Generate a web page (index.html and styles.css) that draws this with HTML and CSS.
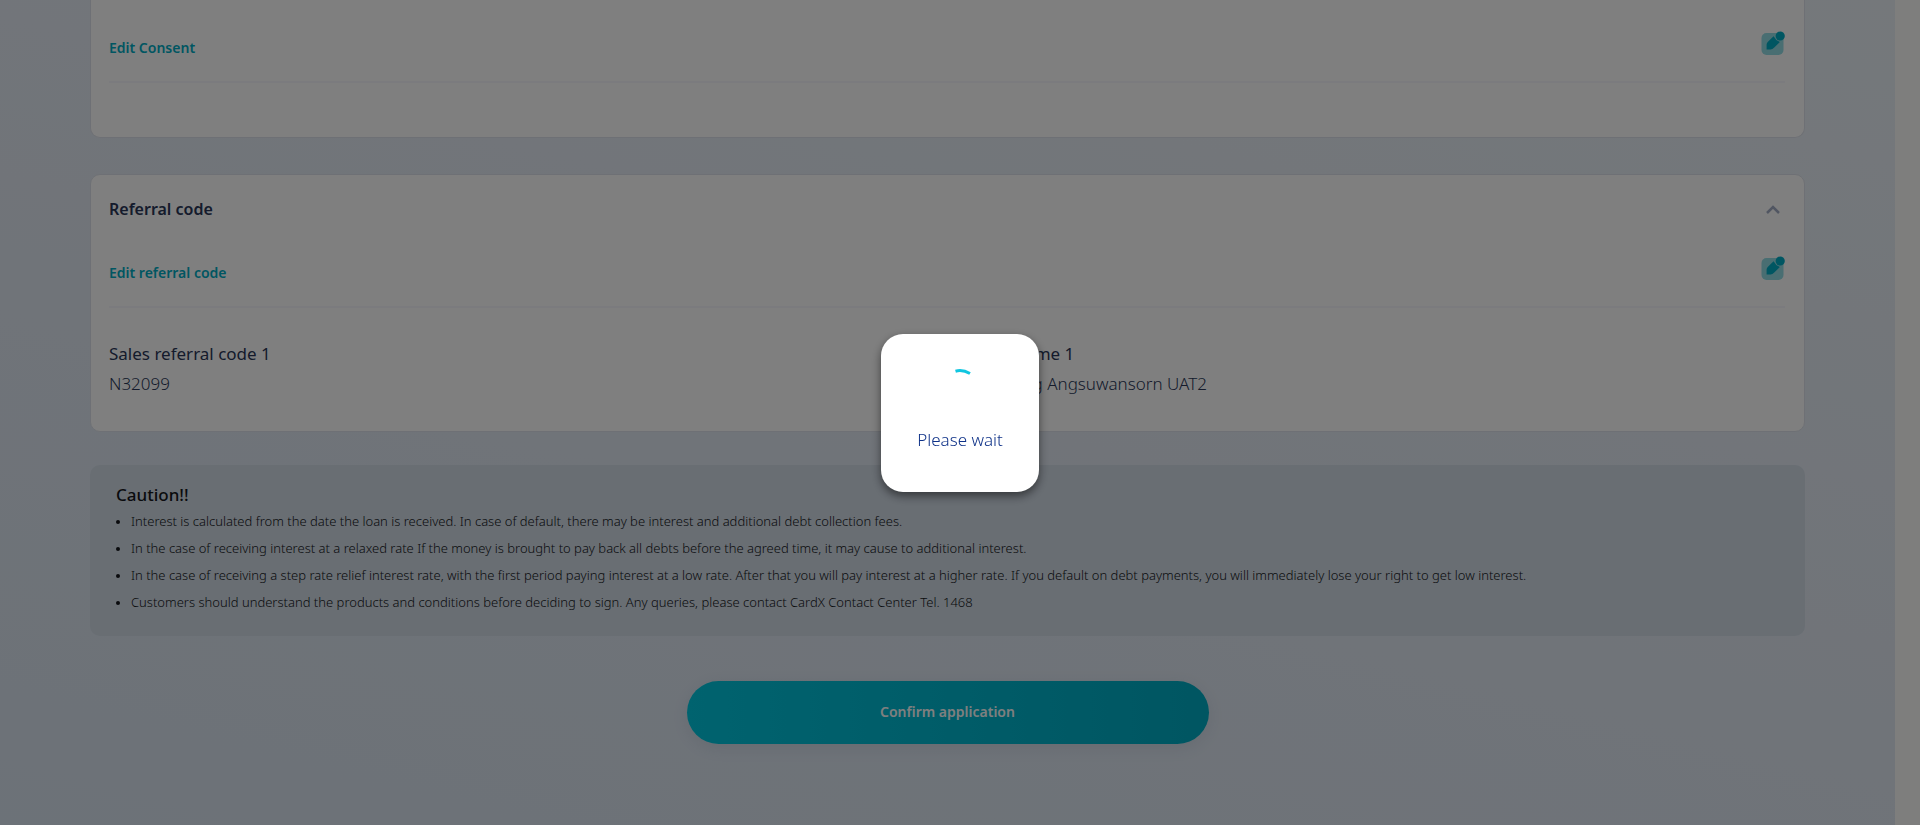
FILE: index.html
```html
<!DOCTYPE html>
<html lang="en">
<head>
<meta charset="utf-8">
<title>Application summary</title>
<link rel="stylesheet" href="styles.css">
</head>
<body>
<svg class="defs" aria-hidden="true">
  <symbol id="edit" viewBox="0 0 24 24">
    <rect x="0.5" y="2" width="22" height="22" rx="5" fill="#93dce4"/>
    <path d="M5.6 18.400V13.600Q5.700 12.200 6.700 11.100L12.600 5.200Q14.500 9.300 18.900 11L13 16.800Q11.500 18.300 9.600 18.400Z" fill="#00acc4"/>
    <circle cx="19.2" cy="5" r="4.600" fill="#00acc4"/>
  </symbol>
</svg>
<main class="page">
  <section class="card card-consent">
    <div class="edit-row">
      <a class="edit-link" href="#consent">Edit Consent</a>
      <button class="icon-button" type="button" aria-label="Edit consent"><svg class="edit-icon"><use href="#edit"/></svg></button>
    </div>
  </section>

  <section class="card card-referral">
    <header class="card-header">
      <h2 class="card-title">Referral code</h2>
      <button class="icon-button" type="button" aria-label="Collapse"><svg class="chevron" viewBox="0 0 24 24"><path d="M6 16L12 10L18 16"/></svg></button>
    </header>
    <div class="edit-row">
      <a class="edit-link" href="#referral">Edit referral code</a>
      <button class="icon-button" type="button" aria-label="Edit referral code"><svg class="edit-icon"><use href="#edit"/></svg></button>
    </div>
    <dl class="details">
      <div>
        <dt>Sales referral code 1</dt>
        <dd>N32099</dd>
      </div>
      <div>
        <dt>Referral name 1</dt>
        <dd>Wuthiphong Angsuwansorn UAT2</dd>
      </div>
    </dl>
  </section>

  <section class="caution">
    <h2 class="caution-title">Caution!!</h2>
    <ul class="caution-list">
      <li>Interest is calculated from the date the loan is received. In case of default, there may be interest and additional debt collection fees.</li>
      <li>In the case of receiving interest at a relaxed rate If the money is brought to pay back all debts before the agreed time, it may cause to additional interest.</li>
      <li>In the case of receiving a step rate relief interest rate, with the first period paying interest at a low rate. After that you will pay interest at a higher rate. If you default on debt payments, you will immediately lose your right to get low interest.</li>
      <li>Customers should understand the products and conditions before deciding to sign. Any queries, please contact CardX Contact Center Tel. 1468</li>
    </ul>
  </section>

  <button class="confirm" type="button">Confirm application</button>
</main>

<div class="overlay">
  <div class="loader" role="status">
    <svg class="spinner" viewBox="0 0 48 48"><path d="M19.500 8.200Q26.500 6.200 34 10.500"/></svg>
    <p class="loader-text">Please wait</p>
  </div>
</div>
</body>
</html>
```
FILE: styles.css
```css
* {
  box-sizing: border-box;
}

body {
  margin: 0;
  background: #fdfcfb;
  color: #2a3758;
  font-family: "Noto Sans", "Open Sans", sans-serif;
  font-size: 16px;
  line-height: 24px;
}

h2, p, ul, dl, dd {
  margin: 0;
  padding: 0;
}

.defs {
  position: absolute;
  width: 0;
  height: 0;
}

.page {
  display: flex;
  flex-direction: column;
  min-height: 100vh;
  margin-right: 25px;
  padding: 0 90px 80px;
  background: linear-gradient(194deg, #eaf1f7 0%, #e2e9f3 50%, #d9e4f0 100%);
}

.card {
  padding: 0 19px 0 18px;
  background: #fff;
  border: 1px solid #dde1ea;
  border-radius: 10px;
}

.card-consent {
  padding-top: 31px;
  padding-bottom: 54px;
  border-top: 0;
  border-radius: 0 0 10px 10px;
}

.card-referral {
  margin-top: 36px;
  padding-bottom: 35px;
}

.card-header {
  display: flex;
  justify-content: space-between;
  align-items: center;
  padding-top: 22px;
}

.card-title,
.caution-title {
  font-size: 16px;
  font-weight: 600;
  line-height: 24px;
}

.caution-title {
  font-size: 17px;
  font-weight: 500;
}

.edit-row {
  display: flex;
  justify-content: space-between;
  align-items: flex-start;
  height: 52px;
  border-bottom: 2px solid #f6f6fc;
}

.card-referral .edit-row {
  margin-top: 35px;
}

.edit-link {
  padding-top: 5px;
  color: #00acc4;
  font-size: 14px;
  font-weight: 600;
  text-decoration: none;
}

.icon-button {
  display: flex;
  padding: 0;
  background: none;
  border: 0;
}

.edit-icon,
.chevron {
  width: 24px;
  height: 24px;
}

.chevron {
  fill: none;
  stroke: #a3adc4;
  stroke-width: 2.5;
}

.details {
  display: grid;
  grid-template-columns: 1fr 1fr;
  margin-top: 34px;
  font-size: 17px;
}

.details dt {
  font-weight: 400;
}

.details dd {
  margin-top: 6px;
  font-weight: 300;
}

.caution {
  margin-top: 33px;
  padding: 18px 26px 20px;
  background: #d2dce7;
  border-radius: 10px;
  color: #15171b;
}

.caution-list {
  margin-top: 1px;
  padding-left: 15px;
  font-size: 13px;
  font-weight: 300;
  line-height: 27px;
}

.caution-list li::marker {
  font-size: 11px;
}

.confirm {
  width: 522px;
  max-width: 100%;
  height: 63px;
  margin: 45px auto 0;
  padding-bottom: 3px;
  background: linear-gradient(90deg, #00c6de, #00acc4);
  border: 0;
  border-radius: 32px;
  box-shadow: 0 4px 16px rgba(60, 80, 120, 0.1);
  color: #fff;
  font: 600 14px "Noto Sans", "Open Sans", sans-serif;
}

.overlay {
  position: fixed;
  inset: 0;
  display: flex;
  align-items: center;
  justify-content: center;
  background: rgba(0, 0, 0, 0.5);
}

.loader {
  display: flex;
  flex-direction: column;
  align-items: center;
  width: 158px;
  height: 158px;
  padding-top: 29px;
  background: #fff;
  border-radius: 22px;
  box-shadow: 0 4px 10px rgba(0, 0, 0, 0.5);
}

.spinner {
  width: 48px;
  height: 48px;
  fill: none;
  stroke: #10c6e0;
  stroke-width: 3;
}

.loader-text {
  margin-top: 17px;
  color: #0f3288;
  font-size: 17px;
  font-weight: 300;
}
```
